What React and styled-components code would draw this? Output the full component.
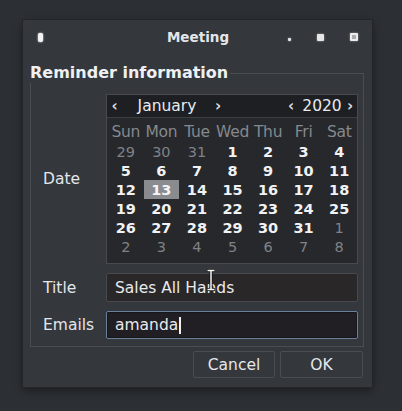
import React from "react";
import styled, { createGlobalStyle } from "styled-components";

const GlobalStyle = createGlobalStyle`
  body {
    margin: 0;
    background: #2c2f33;
    font-family: "DejaVu Sans", "Liberation Sans", sans-serif;
  }
`;

const Page = styled.div`
  padding: 20px 0 0 23px;
  height: 391px;
`;

const Window = styled.div`
  width: 349px;
  background: #34373b;
  box-shadow: 0 0 0 1px #232528, 0 3px 8px rgba(0, 0, 0, 0.45);
  display: flex;
  flex-direction: column;
  padding-bottom: 9px;
`;

const TitleBar = styled.div`
  height: 34px;
  display: grid;
  grid-template-columns: 1fr auto 1fr;
  align-items: center;
  padding: 0 14px 0 15px;
`;

const TitleText = styled.div`
  color: #e4e6ea;
  font-weight: bold;
  font-size: 13.5px;
`;

const Controls = styled.div`
  display: flex;
  align-items: center;
  justify-content: ${(p) => (p.$end ? "flex-end" : "flex-start")};
  gap: 26px;
`;

const MenuDot = styled.span`
  width: 5px;
  height: 9px;
  border-radius: 2px;
  background: #f2f2f2;
  box-shadow: 0 0 2px #ffffff;
`;

const CtrlDot = styled.span`
  box-sizing: border-box;
  width: ${(p) => p.$size}px;
  height: ${(p) => p.$size}px;
  margin-top: ${(p) => p.$drop || 0}px;
  border-radius: 1px;
  background: ${(p) => (p.$hollow ? "#a9abaf" : "#e6e6e6")};
  box-shadow: 0 0 2px rgba(255, 255, 255, 0.6);
  border: ${(p) => (p.$hollow ? "2px solid #ececec" : "none")};
`;

const Group = styled.div`
  margin: 19px 8px 0 7px;
  border: 1px solid #4a4d52;
  display: flex;
  flex-direction: column;
`;

const Legend = styled.div`
  align-self: flex-start;
  margin: -11px 0 0 -1px;
  padding-right: 2px;
  background: #34373b;
  color: #eef0f3;
  font-weight: bold;
  font-size: 16px;
  line-height: 20px;
`;

const Form = styled.div`
  margin-top: 11px;
  padding: 0 5px 7px 0;
  display: grid;
  grid-template-columns: 75px 1fr;
  grid-template-rows: 170px 29px 28px;
  row-gap: 9px;
  align-items: center;
`;

const Label = styled.div`
  padding-left: 12px;
  color: #e3e6eb;
  font-size: 15.5px;
`;

const Calendar = styled.div`
  height: 170px;
  box-sizing: border-box;
  border: 1px solid #47494e;
  background: #26282c;
  display: flex;
  flex-direction: column;
`;

const CalHeader = styled.div`
  height: 23px;
  box-sizing: border-box;
  background: #1d1f22;
  border-bottom: 1px solid #3b3e43;
  display: flex;
  align-items: center;
  justify-content: space-between;
  color: #e8eaee;
  font-size: 15.5px;
`;

const NavGroup = styled.div`
  display: flex;
  align-items: center;
  padding: ${(p) => (p.$right ? "0 1px 0 0" : "0")};
`;

const Arrow = styled.span`
  width: ${(p) => p.$w || 12}px;
  margin-right: ${(p) => p.$gap || 0}px;
  text-align: center;
  font-weight: bold;
  font-size: 15px;
  color: #d8dade;
`;

const NavLabel = styled.span`
  width: ${(p) => p.$w}px;
  text-align: center;
`;

const Days = styled.div`
  padding: 4px 0 6px 1px;
  display: grid;
  grid-template-columns: repeat(7, 1fr);
  grid-template-rows: 20px repeat(6, 19px);
`;

const DayName = styled.div`
  display: flex;
  align-items: center;
  justify-content: center;
  color: #85888d;
  font-size: 15.5px;
  letter-spacing: -0.3px;
`;

const DayCell = styled.div`
  display: flex;
  align-items: center;
  justify-content: center;
  font-size: 14.5px;
  font-weight: ${(p) => (p.$muted ? "normal" : "bold")};
  color: ${(p) => (p.$muted ? "#7f8287" : p.$selected ? "#f4f4f4" : "#f1f2f4")};
  background: ${(p) => (p.$selected ? "#8a8b8e" : "transparent")};
`;

const Field = styled.div`
  position: relative;
  height: ${(p) => (p.$focused ? 28 : 29)}px;
  box-sizing: border-box;
  border: 1px solid ${(p) => (p.$focused ? "#6a7f9c" : "#47494e")};
  box-shadow: ${(p) => (p.$focused ? "inset 0 0 0 1px #14161a" : "none")};
  border-radius: 2px;
  background: ${(p) => (p.$focused ? "#221f24" : "#2a2729")};
  display: flex;
  align-items: center;
  padding-left: 8px;
  color: #e9eaec;
  font-size: 15.5px;
`;

const Caret = styled.span`
  width: 1.5px;
  height: 17px;
  margin-left: 1px;
  background: #f0f0f0;
`;

const Pointer = styled.svg`
  position: absolute;
  left: 99px;
  top: -5px;
`;

const Buttons = styled.div`
  margin: 4px 9px 0 0;
  display: flex;
  justify-content: flex-end;
  gap: 5px;
`;

const Button = styled.button`
  width: ${(p) => p.$w}px;
  height: 27px;
  border: 1px solid #4a4d52;
  border-radius: 2px;
  background: #34373b;
  color: #e6e8eb;
  font-family: "DejaVu Sans", sans-serif;
  font-size: 15.5px;
  padding: 0;
`;

const dayNames = ["Sun", "Mon", "Tue", "Wed", "Thu", "Fri", "Sat"];

const days = [
  [29, true], [30, true], [31, true], [1], [2], [3], [4],
  [5], [6], [7], [8], [9], [10], [11],
  [12], [13], [14], [15], [16], [17], [18],
  [19], [20], [21], [22], [23], [24], [25],
  [26], [27], [28], [29], [30], [31], [1, true],
  [2, true], [3, true], [4, true], [5, true], [6, true], [7, true], [8, true],
];

export default function App() {
  return (
    <Page>
      <GlobalStyle />
      <Window>
        <TitleBar>
          <Controls>
            <MenuDot />
          </Controls>
          <TitleText>Meeting</TitleText>
          <Controls $end>
            <CtrlDot $size={3} $drop={5} />
            <CtrlDot $size={7} />
            <CtrlDot $size={8} $hollow />
          </Controls>
        </TitleBar>

        <Group>
          <Legend>Reminder information</Legend>
          <Form>
            <Label>Date</Label>
            <Calendar>
              <CalHeader>
                <NavGroup>
                  <Arrow $w={15}>‹</Arrow>
                  <NavLabel $w={90}>January</NavLabel>
                  <Arrow>›</Arrow>
                </NavGroup>
                <NavGroup $right>
                  <Arrow $gap={3}>‹</Arrow>
                  <NavLabel $w={44}>2020</NavLabel>
                  <Arrow>›</Arrow>
                </NavGroup>
              </CalHeader>
              <Days>
                {dayNames.map((d) => (
                  <DayName key={d}>{d}</DayName>
                ))}
                {days.map(([n, muted], i) => (
                  <DayCell key={i} $muted={muted} $selected={n === 13}>
                    {n}
                  </DayCell>
                ))}
              </Days>
            </Calendar>

            <Label>Title</Label>
            <Field>
              Sales All Hands
              <Pointer width="10" height="22" viewBox="0 0 10 22">
                <path
                  d="M1 1.5h8M5 1.5v19M1 20.5h8"
                  stroke="#1a1a1a"
                  strokeWidth="3.2"
                  fill="none"
                />
                <path
                  d="M1.5 1.5h7M5 1.5v19M1.5 20.5h7"
                  stroke="#f5f5f5"
                  strokeWidth="1.5"
                  fill="none"
                />
              </Pointer>
            </Field>

            <Label>Emails</Label>
            <Field $focused>
              amanda
              <Caret />
            </Field>
          </Form>
        </Group>

        <Buttons>
          <Button $w={82}>Cancel</Button>
          <Button $w={83}>OK</Button>
        </Buttons>
      </Window>
    </Page>
  );
}
